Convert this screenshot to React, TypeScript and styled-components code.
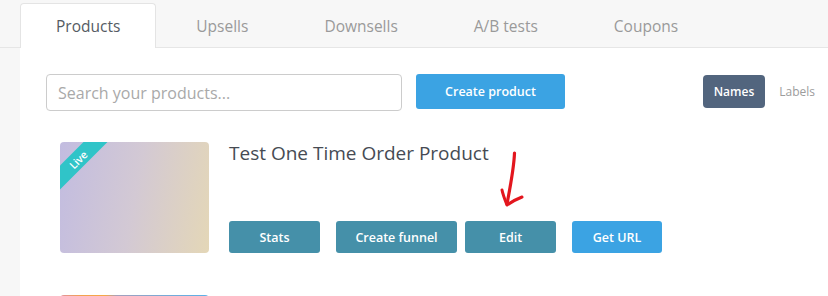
import React from "react";
import styled, { createGlobalStyle } from "styled-components";

const Global = createGlobalStyle`
  html, body { margin: 0; padding: 0; background: #f7f7f7; }
  body { font-family: "Open Sans", "Liberation Sans", sans-serif; }
  * { box-sizing: border-box; }
`;

const Page = styled.div`
  position: relative;
  width: 828px;
  height: 296px;
  overflow: hidden;
  background: #f7f7f7;
  display: flex;
  flex-direction: column;
`;

const TabBar = styled.div`
  display: flex;
  gap: 4px;
  padding: 3px 0 0 20px;
  height: 48px;
  border-bottom: 1px solid #e6e6e6;
`;

const Tab = styled.div<{ $active?: boolean }>`
  height: 45px;
  padding: 0 35px;
  display: flex;
  align-items: center;
  justify-content: center;
  font-size: 15.5px;
  color: ${(p) => (p.$active ? "#555b63" : "#9a9a9a")};
  background: ${(p) => (p.$active ? "#ffffff" : "transparent")};
  border: 1px solid ${(p) => (p.$active ? "#e4e4e4" : "transparent")};
  border-bottom: none;
  border-radius: 4px 4px 0 0;
  margin-bottom: -1px;
`;

const Panel = styled.div`
  flex: 1;
  margin-left: 20px;
  background: #ffffff;
  padding: 26px 1px 0 26px;
  display: flex;
  flex-direction: column;
`;

const Toolbar = styled.div`
  display: flex;
  align-items: flex-start;
  gap: 14px;
`;

const SearchInput = styled.input`
  width: 356px;
  height: 37px;
  border: 1px solid #cccccc;
  border-radius: 4px;
  padding: 0 11px;
  font-family: "Open Sans", "Liberation Sans", sans-serif;
  font-size: 16px;
  color: #555;
  outline: none;
  &::placeholder { color: #a9a9a9; }
`;

const Button = styled.button<{ $color: string; $w: number; $h?: number }>`
  width: ${(p) => p.$w}px;
  height: ${(p) => p.$h ?? 32}px;
  border: none;
  border-radius: 3px;
  background: ${(p) => p.$color};
  color: #ffffff;
  font-family: "Open Sans", "Liberation Sans", sans-serif;
  font-weight: 600;
  font-size: 12.5px;
  padding: 0;
  display: flex;
  align-items: center;
  justify-content: center;
`;

const ViewToggle = styled.div`
  margin-left: auto;
  margin-top: 1px;
  display: flex;
  gap: 2px;
`;

const ToggleButton = styled.button<{ $active?: boolean }>`
  height: 33px;
  padding: 0 ${(p) => (p.$active ? 11 : 12)}px;
  border: none;
  border-radius: 4px;
  background: ${(p) => (p.$active ? "#52657e" : "transparent")};
  color: ${(p) => (p.$active ? "#ffffff" : "#9c9c9c")};
  font-family: "Open Sans", "Liberation Sans", sans-serif;
  font-weight: ${(p) => (p.$active ? 600 : 400)};
  font-size: 12px;
`;

const ProductList = styled.div`
  display: flex;
  flex-direction: column;
  gap: 42px;
  padding: 31px 0 0 14px;
`;

const ProductRow = styled.div`
  display: flex;
  gap: 20px;
`;

const Thumb = styled.div<{ $bg: string }>`
  position: relative;
  flex: none;
  width: 149px;
  height: 111px;
  border-radius: 4px;
  overflow: hidden;
  background: ${(p) => p.$bg};
`;

const Ribbon = styled.div`
  position: absolute;
  left: -32px;
  top: 9px;
  width: 100px;
  height: 17px;
  background: #30c4c8;
  transform: rotate(-45deg);
  color: #ffffff;
  font-size: 10.5px;
  font-weight: 600;
  display: flex;
  align-items: center;
  justify-content: center;
`;

const Info = styled.div`
  display: flex;
  flex-direction: column;
  justify-content: space-between;
  height: 111px;
`;

const Title = styled.div`
  font-size: 19px;
  line-height: 26px;
  color: #464b53;
  margin-top: -2px;
`;

const Actions = styled.div`
  display: flex;
  gap: 16px;
`;

const Spaced = styled.div<{ $ml: number }>`
  margin-left: ${(p) => p.$ml}px;
  display: flex;
`;

const Annotation = styled.svg`
  position: absolute;
  left: 498px;
  top: 150px;
`;

const tabs = ["Products", "Upsells", "Downsells", "A/B tests", "Coupons"];

export default function App() {
  return (
    <>
      <Global />
      <Page>
        <TabBar>
          {tabs.map((t, i) => (
            <Tab key={t} $active={i === 0}>
              {t}
            </Tab>
          ))}
        </TabBar>
        <Panel>
          <Toolbar>
            <SearchInput placeholder="Search your products..." />
            <Button $color="#3ba3e3" $w={149} $h={35}>
              Create product
            </Button>
            <ViewToggle>
              <ToggleButton $active>Names</ToggleButton>
              <ToggleButton>Labels</ToggleButton>
            </ViewToggle>
          </Toolbar>
          <ProductList>
            <ProductRow>
              <Thumb $bg="linear-gradient(100deg, #c2bce0 0%, #d3c9d4 50%, #e4d7b7 100%)">
                <Ribbon>Live</Ribbon>
              </Thumb>
              <Info>
                <Title>Test One Time Order Product</Title>
                <Actions>
                  <Button $color="#4590a9" $w={91}>Stats</Button>
                  <Button $color="#4590a9" $w={121}>Create funnel</Button>
                  <Spaced $ml={-8}>
                    <Button $color="#4590a9" $w={91}>Edit</Button>
                  </Spaced>
                  <Button $color="#3ba3e3" $w={90}>Get URL</Button>
                </Actions>
              </Info>
            </ProductRow>
            <ProductRow>
              <Thumb $bg="linear-gradient(90deg, #e2939f 0%, #f2a150 14%, #f6a845 30%, #a5a0bc 38%, #78aad6 70%, #5ab1e9 100%)" />
            </ProductRow>
          </ProductList>
        </Panel>
        <Annotation width="30" height="60" viewBox="0 0 30 60">
          <path
            d="M16.5 3 C16 18 12 38 9 54"
            fill="none"
            stroke="#e3161e"
            strokeWidth="3.2"
            strokeLinecap="round"
          />
          <path
            d="M4 40 C5 45 7 50 9 55 C13 52 19 49 24 47"
            fill="none"
            stroke="#e3161e"
            strokeWidth="3"
            strokeLinecap="round"
            strokeLinejoin="round"
          />
        </Annotation>
      </Page>
    </>
  );
}
